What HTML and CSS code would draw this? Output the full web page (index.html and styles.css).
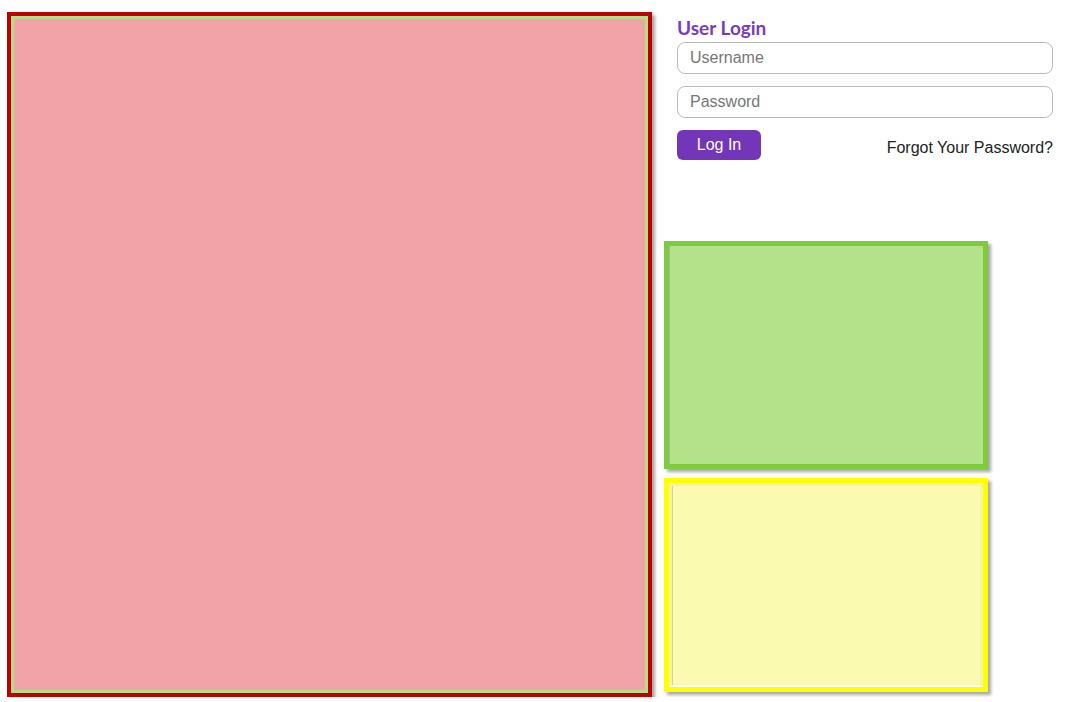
FILE: index.html
```html
<!DOCTYPE html>
<html lang="en">
<head>
    <meta charset="UTF-8">
    <meta name="viewport" content="width=device-width, initial-scale=1.0">
    <title>User Login</title>
    <link rel="stylesheet" href="styles.css">
</head>
<body>
    <div class="page">
        <div class="main-box">
            <div class="main-inner"></div>
        </div>

        <div class="side">
            <form class="login">
                <h2>User Login</h2>
                <input type="text" class="field" placeholder="Username">
                <input type="password" class="field" placeholder="Password">
                <div class="login-row">
                    <button type="button" class="login-btn">Log In</button>
                    <a href="#" class="forgot">Forgot Your Password?</a>
                </div>
            </form>

            <div class="panel panel-green">
                <div class="panel-inner"></div>
            </div>
            <div class="panel panel-yellow">
                <div class="panel-inner"></div>
            </div>
        </div>
    </div>
</body>
</html>
```

FILE: styles.css
```css
body {
    margin: 0;
    font-family: "Liberation Sans", Arial, sans-serif;
    background: #fff;
}
.page {
    display: flex;
    gap: 12px;
    padding: 12px 0 0 7px;
}
.main-box {
    width: 645px;
    height: 685px;
    box-sizing: border-box;
    border: 4px solid #c00000;
    box-shadow: 3px 3px 3px rgba(0, 0, 0, 0.35);
    flex-shrink: 0;
}
.main-inner {
    height: 100%;
    box-sizing: border-box;
    border: 3px solid #b5dd8c;
    background: #f1a3a8;
}
.side {
    width: 389px;
    display: flex;
    flex-direction: column;
}
.login {
    padding-left: 13px;
    margin: 0;
}
.login h2 {
    font-family: Lato, sans-serif;
    font-weight: 700;
    font-size: 19px;
    line-height: 24px;
    color: #7b3bbd;
    margin: 4px 0 2px;
}
.field {
    display: block;
    width: 376px;
    height: 32px;
    box-sizing: border-box;
    border: 1px solid #bbb;
    border-radius: 8px;
    padding: 0 12px;
    margin-bottom: 12px;
    font-family: "Liberation Sans", Arial, sans-serif;
    font-size: 16px;
    outline: none;
}
.field::placeholder {
    color: #777;
}
.login-row {
    display: flex;
    justify-content: space-between;
    align-items: flex-end;
    width: 376px;
}
.login-btn {
    width: 84px;
    height: 30px;
    border: none;
    border-radius: 6px;
    background: #7436b8;
    color: #fff;
    font-family: "Liberation Sans", Arial, sans-serif;
    font-size: 16px;
    padding: 0;
}
.forgot {
    color: #222;
    text-decoration: none;
    font-size: 16px;
    line-height: 18px;
    padding-bottom: 3px;
}
.panel {
    width: 324px;
    box-sizing: border-box;
    border: 5px solid;
    box-shadow: 3px 3px 3px rgba(0, 0, 0, 0.35);
}
.panel-inner {
    height: 100%;
    box-sizing: border-box;
}
.panel-green {
    height: 228px;
    margin-top: 81px;
    border-color: #7ccc3e;
    background: #b3e28a;
}
.panel-green .panel-inner {
    border-left: 1px solid #b0b0b0;
}
.panel-yellow {
    height: 214px;
    margin-top: 9px;
    border-color: #ffff00;
    background: #fafab0;
}
.panel-yellow .panel-inner {
    border: 3px solid #f4f4a8;
    border-bottom: 2px solid #fff;
    box-shadow: inset 1px 0 0 rgba(0, 0, 0, 0.15);
}
```
